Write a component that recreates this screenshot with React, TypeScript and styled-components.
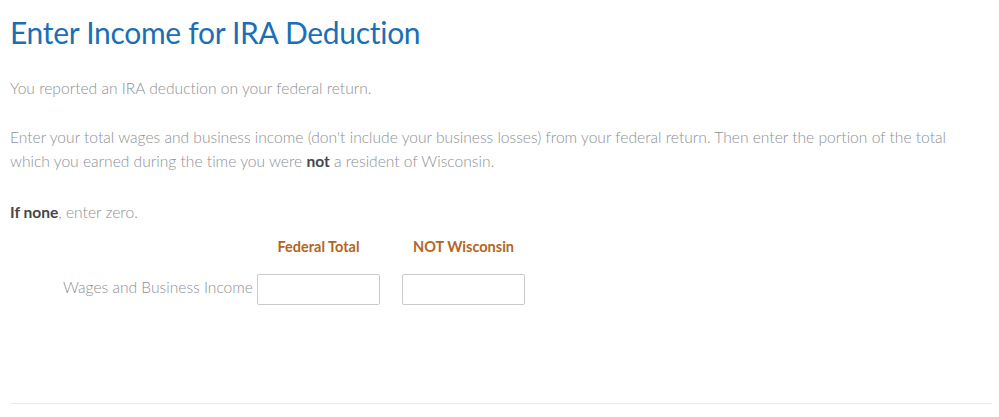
import styled, { createGlobalStyle } from 'styled-components';

const GlobalStyle = createGlobalStyle`
  html, body {
    margin: 0;
    padding: 0;
    background: #ffffff;
  }
  body {
    font-family: Lato, "Noto Sans", sans-serif;
    font-variant-ligatures: none;
  }
`;

const Page = styled.div`
  width: 999px;
  height: 417px;
  box-sizing: border-box;
  padding: 0 7px 0 10px;
  display: flex;
  flex-direction: column;
`;

const Title = styled.h1`
  margin: 14px 0 0;
  font-size: 30px;
  font-weight: 400;
  line-height: 36px;
  letter-spacing: -0.3px;
  color: #1a6fb5;
`;

const Text = styled.p<{ $top: number }>`
  margin: ${(p) => p.$top}px 0 0;
  max-width: 955px;
  font-size: 15.6px;
  line-height: 24px;
  color: #8d9096;
  font-weight: 300;

  strong {
    font-weight: 700;
    color: #46474a;
  }
`;

const Grid = styled.div`
  margin-top: 14px;
  display: grid;
  grid-template-columns: 225px 123px 123px;
  column-gap: 22px;
  row-gap: 19px;
  align-items: center;
`;

const ColHead = styled.div`
  font-size: 14.5px;
  font-weight: 700;
  color: #b5651d;
  text-align: center;
`;

const RowLabel = styled.label`
  font-size: 15.6px;
  font-weight: 300;
  color: #8d9096;
  text-align: right;
  margin-right: -18px;
  padding-bottom: 6px;
  white-space: nowrap;
`;

const Amount = styled.input`
  box-sizing: border-box;
  width: 123px;
  height: 31px;
  border: 1px solid #c9cacc;
  border-radius: 2px;
  background: #fff;
  font: inherit;
  padding: 0 8px;
`;

const Spacer = styled.div`
  flex: 1;
`;

const Divider = styled.hr`
  margin: 0 0 13px;
  border: none;
  border-top: 1px solid #e9eaeb;
  width: 982px;
`;

export default function App() {
  return (
    <>
      <GlobalStyle />
      <Page>
        <Title>Enter Income for IRA Deduction</Title>
        <Text $top={26}>You reported an IRA deduction on your federal return.</Text>
        <Text $top={25}>
          Enter your total wages and business income (don't include your business losses) from your
          federal return. Then enter the portion of the total which you earned during the time you
          were <strong>not</strong> a resident of Wisconsin.
        </Text>
        <Text $top={27}>
          <strong>If none</strong>, enter zero.
        </Text>
        <Grid>
          <span />
          <ColHead>Federal Total</ColHead>
          <ColHead>NOT Wisconsin</ColHead>
          <RowLabel>Wages and Business Income</RowLabel>
          <Amount aria-label="Federal Total" />
          <Amount aria-label="NOT Wisconsin" />
        </Grid>
        <Spacer />
        <Divider />
      </Page>
    </>
  );
}
